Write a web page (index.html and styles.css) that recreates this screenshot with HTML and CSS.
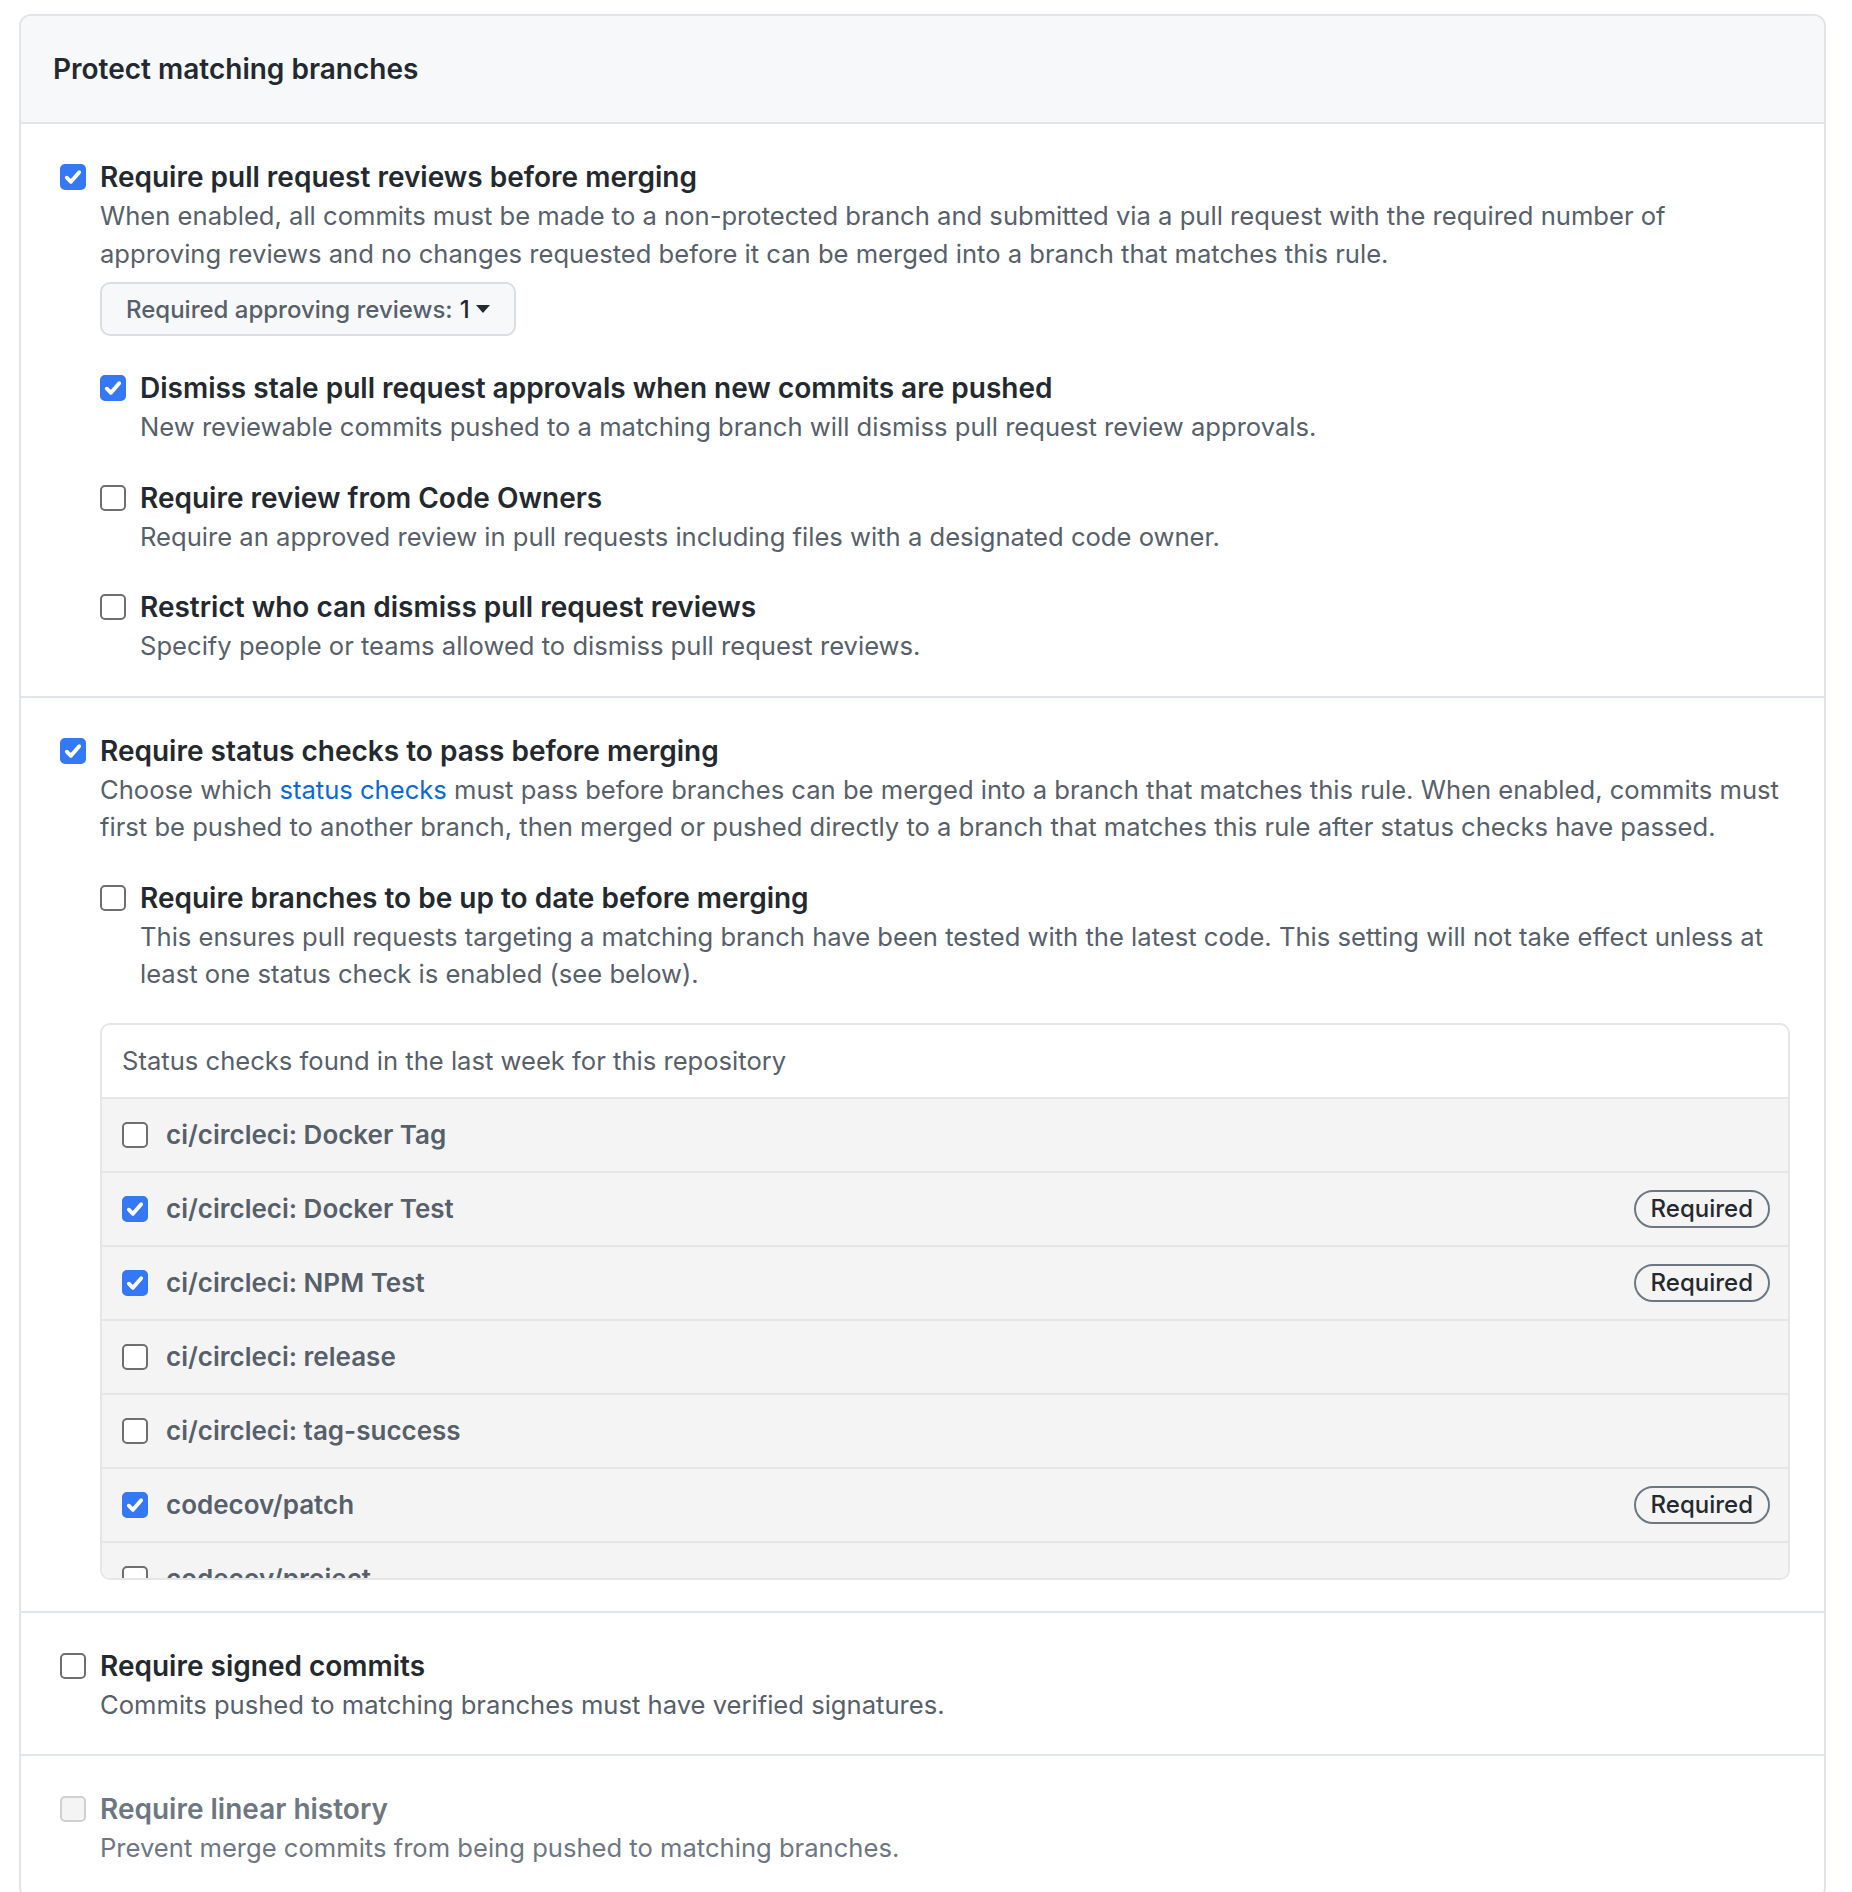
FILE: index.html
```html
<!DOCTYPE html>
<html>
  <head>
    <title>Branch protection rule</title>
    <link rel="stylesheet" href="styles.css">
  </head>
  <body>
    <div class="box">
      <div class="box-header">
        <h3>Protect matching branches</h3>
      </div>

      <!-- pull request reviews -->
      <div class="box-row">
        <div class="option">
          <span class="check checked"><svg viewBox="0 0 16 16"><path d="M3.5 8.5l3 3 6-7"/></svg></span>
          <div class="option-body">
            <div class="option-title">Require pull request reviews before merging</div>
            <p class="note">When enabled, all commits must be made to a non-protected branch and submitted via a pull request with the required number of approving reviews and no changes requested before it can be merged into a branch that matches this rule.</p>
            <button class="select-btn">Required approving reviews: <span class="select-value">1</span><span class="caret"></span></button>

            <div class="sub-options">
              <div class="option">
                <span class="check checked"><svg viewBox="0 0 16 16"><path d="M3.5 8.5l3 3 6-7"/></svg></span>
                <div class="option-body">
                  <div class="option-title">Dismiss stale pull request approvals when new commits are pushed</div>
                  <p class="note">New reviewable commits pushed to a matching branch will dismiss pull request review approvals.</p>
                </div>
              </div>
              <div class="option">
                <span class="check"></span>
                <div class="option-body">
                  <div class="option-title">Require review from Code Owners</div>
                  <p class="note">Require an approved review in pull requests including files with a designated code owner.</p>
                </div>
              </div>
              <div class="option">
                <span class="check"></span>
                <div class="option-body">
                  <div class="option-title">Restrict who can dismiss pull request reviews</div>
                  <p class="note">Specify people or teams allowed to dismiss pull request reviews.</p>
                </div>
              </div>
            </div>
          </div>
        </div>
      </div>

      <!-- status checks -->
      <div class="box-row">
        <div class="option">
          <span class="check checked"><svg viewBox="0 0 16 16"><path d="M3.5 8.5l3 3 6-7"/></svg></span>
          <div class="option-body">
            <div class="option-title">Require status checks to pass before merging</div>
            <p class="note">Choose which <a href="#">status checks</a> must pass before branches can be merged into a branch that matches this rule. When enabled, commits must first be pushed to another branch, then merged or pushed directly to a branch that matches this rule after status checks have passed.</p>

            <div class="sub-options">
              <div class="option">
                <span class="check"></span>
                <div class="option-body">
                  <div class="option-title">Require branches to be up to date before merging</div>
                  <p class="note">This ensures pull requests targeting a matching branch have been tested with the latest code. This setting will not take effect unless at least one status check is enabled (see below).</p>
                </div>
              </div>
            </div>

            <div class="checks-box">
              <div class="checks-header">Status checks found in the last week for this repository</div>
              <div class="checks-list">
                <div class="check-row">
                  <span class="check"></span>
                  <span class="check-name">ci/circleci: Docker Tag</span>
                </div>
                <div class="check-row">
                  <span class="check checked"><svg viewBox="0 0 16 16"><path d="M3.5 8.5l3 3 6-7"/></svg></span>
                  <span class="check-name">ci/circleci: Docker Test</span>
                  <span class="badge">Required</span>
                </div>
                <div class="check-row">
                  <span class="check checked"><svg viewBox="0 0 16 16"><path d="M3.5 8.5l3 3 6-7"/></svg></span>
                  <span class="check-name">ci/circleci: NPM Test</span>
                  <span class="badge">Required</span>
                </div>
                <div class="check-row">
                  <span class="check"></span>
                  <span class="check-name">ci/circleci: release</span>
                </div>
                <div class="check-row">
                  <span class="check"></span>
                  <span class="check-name">ci/circleci: tag-success</span>
                </div>
                <div class="check-row">
                  <span class="check checked"><svg viewBox="0 0 16 16"><path d="M3.5 8.5l3 3 6-7"/></svg></span>
                  <span class="check-name">codecov/patch</span>
                  <span class="badge">Required</span>
                </div>
                <div class="check-row">
                  <span class="check"></span>
                  <span class="check-name">codecov/project</span>
                </div>
              </div>
            </div>
          </div>
        </div>
      </div>

      <!-- signed commits -->
      <div class="box-row">
        <div class="option">
          <span class="check"></span>
          <div class="option-body">
            <div class="option-title">Require signed commits</div>
            <p class="note">Commits pushed to matching branches must have verified signatures.</p>
          </div>
        </div>
      </div>

      <!-- linear history (disabled) -->
      <div class="box-row">
        <div class="option disabled">
          <span class="check"></span>
          <div class="option-body">
            <div class="option-title">Require linear history</div>
            <p class="note">Prevent merge commits from being pushed to matching branches.</p>
          </div>
        </div>
      </div>
    </div>
  </body>
</html>
```

FILE: styles.css
```css
body {
  margin: 0;
  padding: 14px 26px 0 19px;
  font-family: Inter, "Noto Sans", sans-serif;
  color: #24292f;
  background: #fff;
}
.box {
  border: 2px solid #e1e4e8;
  border-radius: 12px;
  overflow: hidden;
}
.box-header {
  background: #f6f8fa;
  border-bottom: 2px solid #e1e4e8;
  height: 106px;
  display: flex;
  align-items: center;
  padding: 0 32px;
}
.box-header h3 {
  margin: 0;
  font-size: 28px;
  font-weight: 600;
}
.box-row {
  padding: 33px 34px 31px 39px;
}
.box-row + .box-row {
  border-top: 2px solid #e1e4e8;
}
.option {
  display: flex;
  align-items: flex-start;
  gap: 14px;
}
.option > .check {
  margin-top: 7px;
}
.option-body {
  flex: 1;
  min-width: 0;
}
.option-title {
  font-size: 28px;
  font-weight: 600;
  line-height: 40px;
}
.note {
  margin: 0;
  font-size: 25.6px;
  line-height: 37.5px;
  color: #57606a;
}
.note a {
  color: #0969da;
  text-decoration: none;
}
.disabled .option-title,
.disabled .note {
  color: #6e7781;
}
.disabled .check {
  border-color: #d0d0d0;
  background: #f4f4f4;
}
.check {
  flex: none;
  width: 26px;
  height: 26px;
  box-sizing: border-box;
  border: 2px solid #6f6f6f;
  border-radius: 5px;
  background: #fff;
  display: inline-flex;
  align-items: center;
  justify-content: center;
}
.check.checked {
  background: #3478f6;
  border-color: #3478f6;
}
.check svg {
  width: 22px;
  height: 22px;
  fill: none;
  stroke: #fff;
  stroke-width: 2.8;
  stroke-linecap: round;
  stroke-linejoin: round;
}
.select-btn {
  margin-top: 10px;
  height: 54px;
  padding: 0 24px;
  font-family: inherit;
  font-size: 24px;
  font-weight: 500;
  color: #57606a;
  background: #f6f8fa;
  border: 2px solid #dadde1;
  border-radius: 10px;
  display: inline-flex;
  align-items: center;
}
.select-value {
  color: #24292f;
  margin-left: 7px;
}
.caret {
  display: inline-block;
  margin-left: 6px;
  border-top: 8px solid #24292f;
  border-left: 7px solid transparent;
  border-right: 7px solid transparent;
}
.sub-options {
  margin-top: 32px;
  display: flex;
  flex-direction: column;
  gap: 32px;
}
.checks-box {
  margin-top: 30px;
  border: 2px solid #e6e6e6;
  border-radius: 10px;
  height: 557px;
  box-sizing: border-box;
  overflow: hidden;
}
.checks-header {
  height: 72px;
  padding: 0 20px;
  display: flex;
  align-items: center;
  font-size: 25.6px;
  color: #57606a;
  border-bottom: 2px solid #e6e6e6;
}
.checks-list {
  background: #f4f4f4;
}
.check-row {
  height: 72px;
  padding: 0 18px 0 20px;
  display: flex;
  align-items: center;
  gap: 18px;
  border-bottom: 2px solid #e6e6e6;
}
.check-name {
  flex: 1;
  font-size: 26px;
  font-weight: 600;
  color: #57606a;
}
.badge {
  height: 38px;
  box-sizing: border-box;
  padding: 0 15px;
  border: 2px solid #6e7781;
  border-radius: 20px;
  display: inline-flex;
  align-items: center;
  font-size: 24px;
  font-weight: 500;
  color: #24292f;
}
```
